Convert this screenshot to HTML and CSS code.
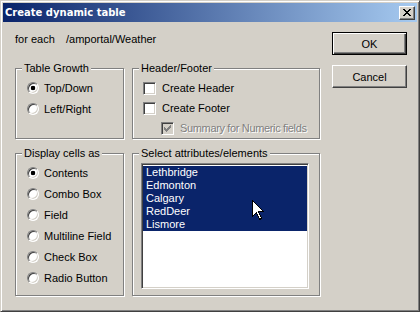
FILE: index.html
```html
<!DOCTYPE html>
<html lang="en">
<head>
  <meta charset="UTF-8">
  <title>Create dynamic table</title>
  <link rel="stylesheet" href="styles.css">
</head>
<body>

  <div class="window">
    <!-- Caption -->
    <div class="titlebar">
      <span class="title">Create dynamic table</span>
      <button class="close" type="button">
        <svg width="8" height="7" viewBox="0 0 8 7" shape-rendering="crispEdges">
          <path fill="#000" d="M0 0h2v1h-2z M6 0h2v1h-2z M1 1h2v1h-2z M5 1h2v1h-2z M2 2h4v1h-4z M3 3h2v1h-2z M2 4h4v1h-4z M1 5h2v1h-2z M5 5h2v1h-2z M0 6h2v1h-2z M6 6h2v1h-2z"/>
        </svg>
      </button>
    </div>

    <div class="dialog">
      <div class="main">
        <div class="source">
          <span class="source-label">for each</span>
          <span>/amportal/Weather</span>
        </div>

        <div class="groups">
          <!-- Table Growth -->
          <fieldset class="group">
            <legend>Table Growth</legend>
            <div class="options">
              <label class="opt"><span class="radio checked"></span>Top/Down</label>
              <label class="opt"><span class="radio"></span>Left/Right</label>
            </div>
          </fieldset>

          <!-- Header/Footer -->
          <fieldset class="group">
            <legend>Header/Footer</legend>
            <div class="options checks">
              <label class="opt"><span class="check"></span>Create Header</label>
              <label class="opt"><span class="check"></span>Create Footer</label>
              <label class="opt sub disabled">
                <span class="check">
                  <svg width="7" height="7" viewBox="0 0 7 7" shape-rendering="crispEdges">
                    <path fill="#808080" d="M6 0h1v1h-1z M5 1h2v1h-2z M0 2h1v1h-1z M4 2h3v1h-3z M0 3h2v1h-2z M3 3h3v1h-3z M0 4h5v1h-5z M1 5h3v1h-3z M2 6h1v1h-1z"/>
                  </svg>
                </span>
                <span class="disabled-text">Summary for Numeric fields</span>
              </label>
            </div>
          </fieldset>

          <!-- Display cells as -->
          <fieldset class="group">
            <legend>Display cells as</legend>
            <div class="options">
              <label class="opt"><span class="radio checked"></span>Contents</label>
              <label class="opt"><span class="radio"></span>Combo Box</label>
              <label class="opt"><span class="radio"></span>Field</label>
              <label class="opt"><span class="radio"></span>Multiline Field</label>
              <label class="opt"><span class="radio"></span>Check Box</label>
              <label class="opt"><span class="radio"></span>Radio Button</label>
            </div>
          </fieldset>

          <!-- Select attributes/elements -->
          <fieldset class="group">
            <legend>Select attributes/elements</legend>
            <ul class="listbox">
              <li class="selected">Lethbridge</li>
              <li class="selected">Edmonton</li>
              <li class="selected">Calgary</li>
              <li class="selected">RedDeer</li>
              <li class="selected">Lismore</li>
            </ul>
          </fieldset>
        </div>
      </div>

      <div class="buttons">
        <button class="btn default" type="button">OK</button>
        <button class="btn" type="button">Cancel</button>
      </div>
    </div>

    <!-- Mouse pointer over the list -->
    <svg class="cursor" width="13" height="21" viewBox="0 0 13 21" shape-rendering="crispEdges">
      <path fill="#fff" stroke="#000" d="M0.5 0.5 L0.5 16.5 L4.5 12.5 L7.5 19.5 L9.5 18.5 L6.5 11.5 L11.5 11.5 Z"/>
    </svg>
  </div>

</body>
</html>
```

FILE: styles.css
```css
/* Global Styles */
body {
  font-family: "Liberation Sans", Arial, sans-serif;
  font-size: 11px;
  background-color: #d4d0c8;
  color: #000;
  margin: 0;
  padding: 0;
}

.window {
  position: relative;
  box-sizing: border-box;
  width: 420px;
  height: 312px;
  display: flex;
  flex-direction: column;
  padding: 2px;
  background-color: #d4d0c8;
  border: 1px solid;
  border-color: #d4d0c8 #404040 #404040 #d4d0c8;
  box-shadow: inset 1px 1px #fff, inset -1px -1px #808080;
}

/* Caption */
.titlebar {
  height: 19px;
  display: flex;
  align-items: center;
  justify-content: space-between;
  padding: 0 2px;
  background: linear-gradient(to right, #0a246a, #a6caf0);
}

.title {
  color: #fff;
  font-family: "DejaVu Sans", sans-serif;
  font-weight: bold;
  font-size: 10px;
}

.close {
  box-sizing: border-box;
  width: 16px;
  height: 14px;
  padding: 0 0 1px 0;
  display: flex;
  align-items: center;
  justify-content: center;
  background-color: #d4d0c8;
  border: 1px solid;
  border-color: #fff #404040 #404040 #fff;
  box-shadow: inset -1px -1px #808080;
}

/* Body */
.dialog {
  flex: 1;
  display: flex;
  gap: 12px;
  padding: 10px 10px 0 12px;
}

.main {
  width: 305px;
}

.source {
  display: flex;
  margin-top: 1px;
  line-height: 13px;
}

.source-label {
  width: 51px;
}

.groups {
  display: grid;
  grid-template-columns: 109px 188px;
  grid-template-rows: 77px 149px;
  gap: 8px;
  margin-top: 16px;
}

.group {
  box-sizing: border-box;
  min-width: 0;
  margin: 0;
  padding: 0;
  border: 1px solid #808080;
  box-shadow: inset 1px 1px #fff, 1px 1px #fff;
}

.group legend {
  margin-left: 6px;
  padding: 0 2px;
  line-height: 13px;
  background-color: #d4d0c8;
}

.options {
  padding-top: 2px;
}

.opt {
  display: flex;
  align-items: center;
  gap: 5px;
  height: 21px;
  padding-left: 11px;
}

.checks {
  padding-top: 3px;
}

.checks .opt {
  gap: 6px;
  height: 20px;
  padding-left: 10px;
}

.checks .opt.sub {
  padding-left: 28px;
}

.radio {
  box-sizing: border-box;
  width: 12px;
  height: 12px;
  flex-shrink: 0;
  border-radius: 50%;
  background: #fff;
  border: 1px solid;
  border-color: #808080 #fff #fff #808080;
  box-shadow: inset 1px 1px #404040, inset -1px -1px #d4d0c8;
}

.radio.checked {
  background: radial-gradient(circle, #000 2px, #fff 2.6px);
}

.check {
  box-sizing: border-box;
  width: 13px;
  height: 13px;
  flex-shrink: 0;
  display: flex;
  align-items: center;
  justify-content: center;
  background: #fff;
  border: 1px solid;
  border-color: #808080 #fff #fff #808080;
  box-shadow: inset 1px 1px #404040, inset -1px -1px #d4d0c8;
}

.disabled .check {
  background: #d4d0c8;
}

.disabled-text {
  color: #808080;
  letter-spacing: -0.35px;
  text-shadow: 1px 1px #fff;
}

/* List box */
.listbox {
  box-sizing: border-box;
  width: 168px;
  height: 126px;
  margin: 3px 0 0 8px;
  padding: 2px 1px 1px 1px;
  list-style: none;
  background: #fff;
  border: 1px solid;
  border-color: #808080 #fff #fff #808080;
  box-shadow: inset 1px 1px #404040, inset -1px -1px #d4d0c8;
}

.listbox li {
  line-height: 13px;
  padding-left: 3px;
}

.listbox li.selected {
  color: #fff;
  background-color: #0a246a;
}

/* Buttons */
.buttons {
  display: flex;
  flex-direction: column;
  gap: 10px;
  width: 75px;
}

.btn {
  box-sizing: border-box;
  width: 75px;
  height: 23px;
  padding: 0;
  font-family: "Liberation Sans", Arial, sans-serif;
  font-size: 11px;
  color: #000;
  background-color: #d4d0c8;
  border: 1px solid;
  border-color: #fff #404040 #404040 #fff;
  box-shadow: inset -1px -1px #808080;
}

.btn.default {
  border-color: #000;
  box-shadow: inset 1px 1px #fff, inset -1px -1px #404040, inset -2px -2px #808080;
}

.cursor {
  position: absolute;
  left: 251px;
  top: 199px;
}
```
